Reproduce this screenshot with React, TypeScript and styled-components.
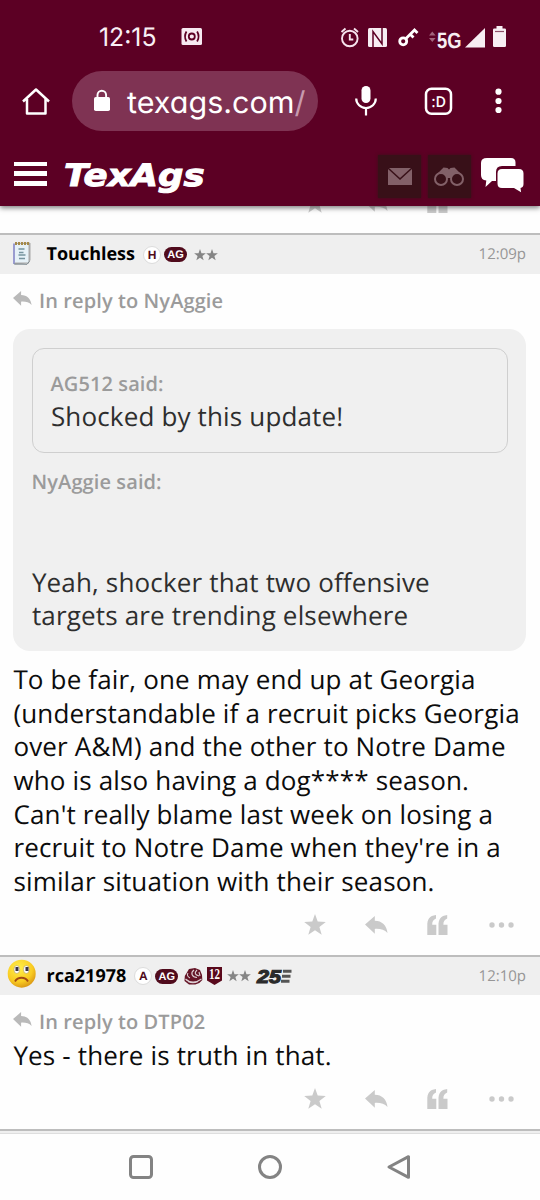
import React from "react";
import styled, { createGlobalStyle } from "styled-components";

const GlobalStyle = createGlobalStyle`
  body { margin: 0; background: #fefefe; }
  * { box-sizing: border-box; }
  svg { display: block; flex: none; overflow: visible; }
`;

const Screen = styled.div`
  width: 540px;
  height: 1200px;
  overflow: hidden;
  display: flex;
  flex-direction: column;
  background: #fefefe;
  color: #0c0c0c;
  font: 400 26px/33.6px "Open Sans", "Noto Sans", sans-serif;
  text-rendering: geometricPrecision;
`;

const TopArea = styled.header`
  position: relative;
  z-index: 1;
  height: 206px;
  flex: none;
  background: #5c0024;
  color: #fff;
  box-shadow: 0 2px 5px rgba(0, 0, 0, 0.5);
`;

const StatusBar = styled.div`
  height: 71px;
  padding: 2px 32px 0 98px;
  display: flex;
  align-items: center;
`;

const StatusIcons = styled.div`
  margin-left: auto;
  display: flex;
  align-items: center;
`;

const BrowserBar = styled.div`
  height: 60px;
  display: flex;
  align-items: center;
  padding: 0 37px 0 22px;
`;

const UrlPill = styled.div`
  width: 246px;
  height: 60px;
  margin: 0 36px 0 22px;
  padding-left: 21px;
  border-radius: 30px;
  display: flex;
  align-items: center;
  gap: 15px;
  background: #7f3353;
`;

const MenuDots = styled.div`
  display: flex;
  margin-left: 41.5px;
`;

const SiteBar = styled.nav`
  height: 75px;
  padding: 15px 16px 0 13.5px;
  display: flex;
  align-items: center;
`;

const Burger = styled.div`
  width: 33px;
  height: 24px;
  margin: -5px 17.5px 0 0;
  display: flex;
  flex-direction: column;
  justify-content: space-between;
  span { height: 4.5px; background: #fff; }
`;

const NavTile = styled.div`
  width: 43px;
  height: 43px;
  margin-right: 6.5px;
  display: flex;
  align-items: center;
  justify-content: center;
  background: #381018;
  box-shadow: 0 0 3px #381018;
`;

const Spacer = styled.div`
  flex: 1;
`;

const ClippedPost = styled.div`
  height: 27px;
  flex: none;
  overflow: hidden;
  display: flex;
  flex-direction: column;
  justify-content: flex-end;
`;

const PostHeader = styled.div<{ $tall?: boolean }>`
  height: ${(p) => (p.$tall ? 41 : 40.5)}px;
  flex: none;
  border-top: 2px solid #bdbdbd;
  background: #efefef;
  display: flex;
  align-items: center;
  padding-right: 14px;
`;

const Avatar = styled.div`
  width: 46.5px;
  flex: none;
`;

const UserName = styled.span`
  font-weight: 700;
  font-size: 18px;
  color: #000;
  margin: 1px 8px 0 0;
`;

const Badges = styled.div`
  display: flex;
  align-items: center;
`;

const Letter = styled.span`
  width: 18px;
  height: 18px;
  border-radius: 50%;
  border: 1px solid #dcdcdc;
  background: #fff;
  color: #500b1c;
  font: 700 12px/16px "Liberation Sans", sans-serif;
  text-align: center;
  margin-right: 3px;
`;

const AgPill = styled.span`
  width: 23px;
  height: 15px;
  border-radius: 8px;
  background: #500b1c;
  color: #fff;
  font: 700 11px/16px "Liberation Sans", sans-serif;
  text-align: center;
`;

const Time = styled.span`
  margin: 1px 0 0 auto;
  font-size: 15px;
  color: #969696;
`;

const PostBody = styled.div`
  padding: 10px 14px 0 13px;
  letter-spacing: 0.1px;
`;

const ReplyLine = styled.div`
  display: flex;
  align-items: center;
  gap: 7px;
  height: 33.6px;
  font-size: 20px;
  font-weight: 600;
  color: #9b9b9b;
  svg { color: #b9b9b9; margin-top: -5px; }
`;

const Quote = styled.blockquote`
  margin: 11.5px 0 12px;
  padding: 18.5px;
  border-radius: 17px;
  background: #f0f0f0;
  color: #2e2e2e;
`;

const InnerQuote = styled.blockquote`
  margin: 0 0 12px;
  padding: 18px;
  border: 1px solid #cfcfcf;
  border-radius: 12px;
`;

const Said = styled.div`
  font-size: 20px;
  font-weight: 600;
  color: #9b9b9b;
`;

const Message = styled.p<{ $gap?: number }>`
  margin: ${(p) => p.$gap ?? 0}px 0 0;
  padding-left: 0.4px;
  letter-spacing: 0.16px;
  white-space: nowrap;
`;

const ActionRow = styled.div`
  height: 56.5px;
  flex: none;
  display: flex;
  justify-content: flex-end;
  align-items: center;
  gap: 39px;
  padding: 0 26px 3px 0;
  color: #cacaca;
  svg:last-child { margin-left: 1.5px; }
`;

const NextPost = styled.div`
  height: 5px;
  flex: none;
  border-top: 2px solid #bdbdbd;
  border-bottom: 1px solid #dedede;
  background: #efefef;
`;

const SystemNav = styled.footer`
  flex: 1;
  display: flex;
  justify-content: center;
  align-items: center;
  gap: 105px;
  color: #838383;
`;

const Star = ({ size }: { size: number }) => (
  <svg width={size} height={size} viewBox="0 0 22 22" fill="currentColor">
    <path d="M11 0l2.7 7.6 8.1.3-6.4 5 2.3 7.8L11 16.2l-6.7 4.5 2.3-7.8-6.4-5 8.1-.3z" />
  </svg>
);

const ReplyArrow = ({ width }: { width: number }) => (
  <svg width={width} height={width * 0.8} viewBox="0 0 23 18.4" fill="currentColor">
    <path d="M0 8.6L9.8 0v4.8C17 4.8 21.8 9.6 22.5 17c-3-3.4-7.3-4.4-12.7-4.1v4.9z" />
  </svg>
);

const QuoteMarks = () => (
  <svg width="22" height="20" viewBox="0 0 22 20" fill="currentColor">
    <path d="M9 0v3.600C6.600 4.800 5 6.600 5.200 9.800H9.300V20H.3V10.500C.1 4.800 2.500.6 9 0z" />
    <path d="M20.200 0v3.600c-2.400 1.200-4 3-3.800 6.200h4.100V20h-9v-9.500C11.300 4.800 13.700.6 20.200 0z" />
  </svg>
);

const Dots = () => (
  <svg width="25" height="6" viewBox="0 0 25 6" fill="currentColor">
    <circle cx="3" cy="3" r="2.700" />
    <circle cx="12.500" cy="3" r="2.700" />
    <circle cx="22" cy="3" r="2.700" />
  </svg>
);

const Actions = () => (
  <ActionRow>
    <Star size={22} />
    <ReplyArrow width={23} />
    <QuoteMarks />
    <Dots />
  </ActionRow>
);

const TwoStars = styled.div<{ $near?: boolean }>`
  display: flex;
  margin-left: ${(p) => (p.$near ? 5 : 7)}px;
  color: #858585;
`;

const Ranks = ({ near }: { near?: boolean }) => (
  <TwoStars $near={near}>
    <Star size={12} />
    <Star size={12} />
  </TwoStars>
);

const Notepad = () => (
  <svg width="46" height="26" viewBox="0 0 46 26">
    <g transform="translate(0 -2)">
      <path d="M15 3l14.500-.4 1 1V20l-2 3.500-13.500 1z" fill="#aaa" />
      <path d="M14 3.500v20.500" stroke="#8587c8" strokeWidth="1.600" />
      <path d="M15 4h13.500v18.500H15z" fill="#e6f1f7" />
      <path d="M14 24l13 .3 2.500-3" stroke="#7d8a91" fill="none" />
      <path d="M15 3.500h14" stroke="#a58a4a" strokeWidth="3" strokeDasharray="2 1" />
      <path d="M18.500 9h6M19 12.500h4.500M18.500 15h7M19 18.500h6" stroke="#76949f" strokeWidth="1.300" />
    </g>
  </svg>
);

const SadFace = () => (
  <svg width="46" height="30" viewBox="0 0 46 30">
    <defs>
      <radialGradient id="face" cx="0.4" cy="0.3" r="0.75">
        <stop offset="0" stopColor="#fff04a" />
        <stop offset="0.650" stopColor="#f9cb22" />
        <stop offset="1" stopColor="#d69013" />
      </radialGradient>
    </defs>
    <g transform="translate(0 -2)">
      <circle cx="21.700" cy="14.700" r="14" fill="url(#face)" />
      <ellipse cx="16.800" cy="10.500" rx="2.900" ry="4" fill="#fff" stroke="#b59b4a" strokeWidth=".6" />
      <ellipse cx="26.300" cy="10.500" rx="2.900" ry="4" fill="#fff" stroke="#b59b4a" strokeWidth=".6" />
      <path d="M15.500 8h3v4h-3zM25.500 8h3v4h-3z" fill="#3a3340" />
      <path d="M15 22.500c3-5 10-5 13 0" fill="none" stroke="#a34a12" strokeWidth="1.900" />
    </g>
  </svg>
);

const RingMark = styled.svg`
  margin-left: 5.5px;
`;

const RingBadge = () => (
  <RingMark width="19" height="17" viewBox="0 0 19 17">
    <path d="M5 1l6-1 5 2 2 5 .3 5-3 3-4 1.500H5L.5 13 .8 8z" fill="#641426" />
    <path d="M10 2C6 5 8 9 13 9.500M13 2c-3 3-2 5 2 6M1.500 11c4 4 11 4 16 0M4 13.500c3 1.500 7 1.500 10 0M4 5c-1.500 2 0 4 2 5M15 4l1 4" fill="none" stroke="#dccfd3" strokeWidth="1.100" />
  </RingMark>
);

const ShieldMark = styled.svg`
  margin-left: 4.5px;
`;

const ShieldBadge = () => (
  <ShieldMark width="15" height="18" viewBox="0 0 15 18">
    <path d="M0 0h15v13.500L7.500 18 0 13.500z" fill="#59091c" />
    <text x="2" y="12" textLength="11" lengthAdjust="spacingAndGlyphs" fill="#fff" fontFamily="Liberation Serif, serif" fontSize="15" fontWeight="700">12</text>
  </ShieldMark>
);

const AnniversaryMark = styled.svg`
  margin-left: 6px;
`;

const Mark25 = () => (
  <AnniversaryMark width="35" height="15" viewBox="0 0 35 15">
    <text x="0" y="14" textLength="24" lengthAdjust="spacingAndGlyphs" fill="#2b2b2b" stroke="#2b2b2b" strokeWidth="1.100" fontFamily="Liberation Sans, sans-serif" fontStyle="italic" fontWeight="700" fontSize="18.500">25</text>
    <path d="M26 2.200h8.500M25 7.200h8.500M24 12.200h8.500" stroke="#555" strokeWidth="3" />
  </AnniversaryMark>
);

const StatusGlyphs = () => (
  <svg width="170" height="24" viewBox="338 24 170 24" fill="#f7eef3">
    <g fill="none" stroke="#f7e3ee" strokeWidth="1.900">
      <circle cx="349.800" cy="37.500" r="7.800" />
      <path d="M349.800 33V38.500h3.500M341.500 31l4-3.500M354 27.500l4 3.500" />
    </g>
    <rect x="368" y="27" width="19" height="19" rx="1.500" />
    <path d="M373 46V30.500l9 12.500V27" fill="none" stroke="#5c0024" strokeWidth="1.500" />
    <g fill="none" stroke="#fff" strokeWidth="2.800">
      <circle cx="403.200" cy="40.300" r="3.500" />
      <path d="M406 37.500l8.500-8.500 3 3M410.500 33.500l3 3" />
    </g>
    <path d="M429 34.500l3.300-4 3.300 4zM429 37l3.300 4 3.300-4z" fill="#a1637c" />
    <text x="437" y="46.500" textLength="24.500" lengthAdjust="spacingAndGlyphs" fontFamily="Liberation Sans, sans-serif" fontWeight="700" fontSize="22">5G</text>
    <path d="M465 46.500L485 27v19.500z" />
    <path d="M496.500 25h6v2.500h2.200q1.300 0 1.300 1.300v15.900q0 1.300-1.300 1.300h-10.400q-1.300 0-1.300-1.300V28.800q0-1.300 1.300-1.300h2.200z" />
    <path d="M495 30.500h9" stroke="#8d5069" strokeWidth="1.200" />
  </svg>
);

const CastMark = styled.svg`
  margin-left: 24.5px;
`;

const CastGlyph = () => (
  <CastMark width="22" height="17" viewBox="0 0 22 17">
    <rect x=".5" width="20.500" height="17" rx="1.500" fill="#f7e9f1" />
    <g fill="none" stroke="#5c0024" strokeWidth="1.800">
      <circle cx="10.800" cy="8.500" r="3" />
      <path d="M5.500 3.500q-3 5 0 10M16.100 3.500q3 5 0 10" />
    </g>
  </CastMark>
);

const UrlText = styled.text`
  font-family: Inter, sans-serif;
  font-size: 30px;
  font-feature-settings: "cv11";
  fill: #fff;
`;

export default function App() {
  return (
    <>
      <GlobalStyle />
      <Screen>
        <TopArea>
          <StatusBar>
            <svg width="58" height="24" viewBox="0 0 58 24">
              <text x="1" y="20.500" textLength="57.500" lengthAdjust="spacingAndGlyphs" fill="#f9eff4" fontFamily="Inter, sans-serif" fontSize="25.500">12:15</text>
            </svg>
            <CastGlyph />
            <StatusIcons>
              <StatusGlyphs />
            </StatusIcons>
          </StatusBar>
          <BrowserBar>
            <svg width="28" height="28" viewBox="0 0 28 28" fill="none" stroke="#fff" strokeWidth="2.500" strokeLinejoin="round">
              <path d="M1 14.500L14 2.500l13 12M5 12v14.500h18.500V12" />
            </svg>
            <UrlPill>
              <svg width="18" height="22" viewBox="0 0 18 22">
                <path d="M4.500 8.500V5a4.300 4.300 0 018.600 0v3.500" fill="none" stroke="#fff" strokeWidth="1.900" />
                <rect x="1" y="7" width="16" height="14" rx="1.800" fill="#fff" />
              </svg>
              <svg width="180" height="40" viewBox="0 0 180 40">
                <UrlText x="1" y="32.300" textLength="178.500" lengthAdjust="spacingAndGlyphs">
                  texags.com<tspan fill="#c79aae">/</tspan>
                </UrlText>
              </svg>
            </UrlPill>
            <svg width="24" height="32" viewBox="0 0 24 32" fill="none" stroke="#fff" strokeWidth="2.200">
              <rect x="7.500" y="1" width="9" height="17" rx="4.500" fill="#fff" stroke="none" />
              <path d="M2.200 13.500a9.800 9.500 0 0019.600 0M12 23v7.500" />
            </svg>
            <Spacer />
            <svg width="29" height="29" viewBox="0 0 29 29">
              <rect x="2" y="1.800" width="25" height="25" rx="5.500" fill="none" stroke="#fff" strokeWidth="2.500" />
              <text x="7.500" y="19.500" textLength="14.500" lengthAdjust="spacingAndGlyphs" fill="#fff" fontFamily="Open Sans, sans-serif" fontWeight="600" fontSize="15">:D</text>
            </svg>
            <MenuDots>
              <svg width="9" height="28" viewBox="0 0 9 28" fill="#fff">
                <circle cx="4.500" cy="4.700" r="3.100" />
                <circle cx="4.500" cy="14" r="3.100" />
                <circle cx="4.500" cy="23" r="3.100" />
              </svg>
            </MenuDots>
          </BrowserBar>
          <SiteBar>
            <Burger><span /><span /><span /></Burger>
            <svg width="141" height="34" viewBox="0 0 141 34">
              <text x="0" y="27" textLength="140.500" lengthAdjust="spacingAndGlyphs" fill="#fff" stroke="#fff" strokeWidth="1" fontFamily="DejaVu Sans, sans-serif" fontStyle="italic" fontWeight="700" fontSize="31">TexAgs</text>
            </svg>
            <Spacer />
            <NavTile>
              <svg width="24" height="17" viewBox="0 0 24 17" fill="#826068">
                <path d="M0 1l12 11L24 1v16H0z" />
                <path d="M1 0h22L12 10z" />
              </svg>
            </NavTile>
            <NavTile>
              <svg width="30" height="19" viewBox="0 0 30 19" fill="none" stroke="#826068" strokeWidth="2">
                <path d="M3 7L9.500 .5l4 .5 1.500 1.500L16.500 1l4-.5L27 7l-9 4h-6z" fill="#826068" stroke="none" />
                <circle cx="7" cy="12" r="6" fill="#381018" />
                <circle cx="23" cy="12" r="6" fill="#381018" />
              </svg>
            </NavTile>
            <svg width="47" height="36" viewBox="-3 1 47 36" fill="#fff">
              <path d="M7 1h24q4.500 0 4.500 4.500V9H22q-6 0-6 6v9h-4l-6.500 6 .8-6.500Q1 23 1 18V6q0-5 6-5z" />
              <path d="M22 12h17q4.500 0 4.500 4.500V27q0 3.500-3 4l.6 4.200L34 31H22q-4.500 0-4.500-4.500v-10Q17.500 12 22 12z" />
            </svg>
          </SiteBar>
        </TopArea>

        <ClippedPost><Actions /></ClippedPost>

        <PostHeader $tall>
          <Avatar><Notepad /></Avatar>
          <UserName>Touchless</UserName>
          <Badges>
            <Letter>H</Letter>
            <AgPill>AG</AgPill>
            <Ranks />
          </Badges>
          <Time>12:09p</Time>
        </PostHeader>
        <PostBody>
          <ReplyLine><ReplyArrow width={19} />In reply to NyAggie</ReplyLine>
          <Quote>
            <InnerQuote>
              <Said>AG512 said:</Said>
              <Message>Shocked by this update!</Message>
            </InnerQuote>
            <Said>NyAggie said:</Said>
            <Message $gap={67.2}>Yeah, shocker that two offensive<br />targets are trending elsewhere</Message>
          </Quote>
          <Message>
            To be fair, one may end up at Georgia<br />
            (understandable if a recruit picks Georgia<br />
            over A&amp;M) and the other to Notre Dame<br />
            who is also having a dog**** season.<br />
            Can't really blame last week on losing a<br />
            recruit to Notre Dame when they're in a<br />
            similar situation with their season.
          </Message>
        </PostBody>
        <Actions />

        <PostHeader>
          <Avatar><SadFace /></Avatar>
          <UserName>rca21978</UserName>
          <Badges>
            <Letter>A</Letter>
            <AgPill>AG</AgPill>
            <RingBadge />
            <ShieldBadge />
            <Ranks near />
            <Mark25 />
          </Badges>
          <Time>12:10p</Time>
        </PostHeader>
        <PostBody>
          <ReplyLine><ReplyArrow width={19} />In reply to DTP02</ReplyLine>
          <Message>Yes - there is truth in that.</Message>
        </PostBody>
        <Actions />
        <NextPost />

        <SystemNav>
          <svg width="24" height="24" viewBox="0 0 24 24" fill="none" stroke="currentColor" strokeWidth="3">
            <rect x="1.500" y="1.500" width="21" height="21" rx="3" />
          </svg>
          <svg width="24" height="24" viewBox="0 0 24 24" fill="none" stroke="currentColor" strokeWidth="3">
            <circle cx="12" cy="12" r="10.500" />
          </svg>
          <svg width="24" height="24" viewBox="0 0 24 24" fill="none" stroke="currentColor" strokeWidth="3" strokeLinejoin="round">
            <path d="M2 12L21.500 1.700v20.600z" />
          </svg>
        </SystemNav>
      </Screen>
    </>
  );
}
